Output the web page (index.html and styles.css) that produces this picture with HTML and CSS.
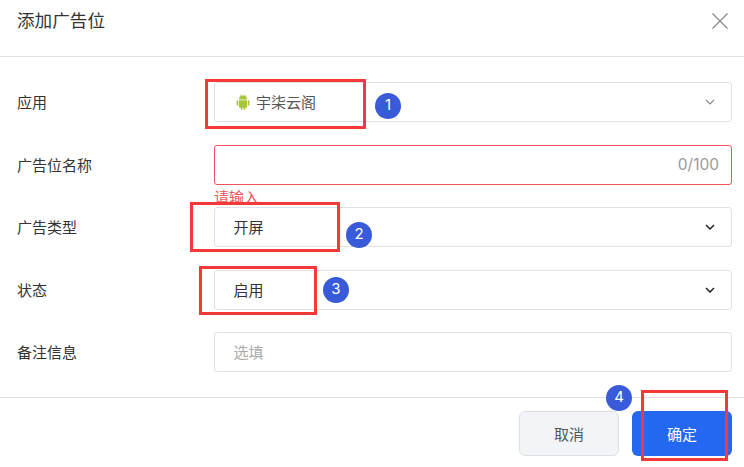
FILE: index.html
```html
<!DOCTYPE html>
<html lang="zh-CN">
<head>
    <meta charset="UTF-8">
    <title>添加广告位</title>
    <link rel="stylesheet" href="styles.css">
</head>
<body>
    <div class="dialog">
        <div class="dialog-header">
            <h2>添加广告位</h2>
            <svg class="close-icon" viewBox="0 0 16 16" width="16" height="16">
                <path d="M0.5 0.5L15.5 15.5M15.5 0.5L0.5 15.5"/>
            </svg>
        </div>

        <div class="dialog-body">
            <div class="form-row">
                <label>应用</label>
                <div class="field">
                    <span class="field-value with-icon">
                        <svg class="android-icon" viewBox="0 0 14 16" width="14" height="16">
                            <path d="M3 5.6a4 4 0 0 1 8 0z"/>
                            <path d="M3 6.2h8v6.6a1 1 0 0 1-1 1H9.2v1.4a.8.8 0 0 1-1.6 0v-1.4H6.4v1.4a.8.8 0 0 1-1.6 0v-1.4H4a1 1 0 0 1-1-1z"/>
                            <rect x="0.6" y="6.2" width="1.7" height="5.4" rx="0.85"/>
                            <rect x="11.7" y="6.2" width="1.7" height="5.4" rx="0.85"/>
                            <path class="android-antenna" d="M4.6 0.6l1 1.6M9.4 0.6l-1 1.6"/>
                        </svg>
                        宇柒云阁
                    </span>
                    <svg class="chevron light" viewBox="0 0 10 6" width="10" height="6"><path d="M1 1l4 4 4-4"/></svg>
                </div>
            </div>

            <div class="form-row">
                <label>广告位名称</label>
                <div class="field error">
                    <span class="counter">0/100</span>
                </div>
                <span class="error-text">请输入</span>
            </div>

            <div class="form-row">
                <label>广告类型</label>
                <div class="field">
                    <span class="field-value">开屏</span>
                    <svg class="chevron" viewBox="0 0 10 6" width="10" height="6"><path d="M1 1l4 4 4-4"/></svg>
                </div>
            </div>

            <div class="form-row">
                <label>状态</label>
                <div class="field">
                    <span class="field-value">启用</span>
                    <svg class="chevron" viewBox="0 0 10 6" width="10" height="6"><path d="M1 1l4 4 4-4"/></svg>
                </div>
            </div>

            <div class="form-row">
                <label>备注信息</label>
                <div class="field">
                    <span class="field-value placeholder">选填</span>
                </div>
            </div>
        </div>

        <div class="dialog-footer">
            <button class="btn btn-cancel">取消</button>
            <button class="btn btn-primary">确定</button>
        </div>

        <!-- annotations drawn over the screenshot -->
        <div class="mark mark-1"></div>
        <div class="mark mark-2"></div>
        <div class="mark mark-3"></div>
        <div class="mark mark-4"></div>
        <div class="badge badge-1">1</div>
        <div class="badge badge-2">2</div>
        <div class="badge badge-3">3</div>
        <div class="badge badge-4">4</div>
    </div>
</body>
</html>
```

FILE: styles.css
```css
* {
    box-sizing: border-box;
    margin: 0;
    padding: 0;
    font-family: Inter, 'Noto Sans CJK SC', sans-serif;
}

body {
    background: #fff;
    overflow: hidden;
}

.dialog {
    position: relative;
    width: 744px;
    height: 467px;
    background: #fff;
    color: #333;
}

.dialog-header {
    display: flex;
    justify-content: space-between;
    align-items: center;
    height: 57px;
    padding: 0 17px 14px;
    border-bottom: 1px solid #e0e0e6;
}

.dialog-header h2 {
    font-size: 17.6px;
    font-weight: 400;
    line-height: 42px;
}

.close-icon {
    margin-right: -1px;
    fill: none;
    stroke: #8a8a8a;
    stroke-width: 1.2;
}

.dialog-body {
    display: flex;
    flex-direction: column;
    gap: 22.5px;
    height: 341px;
    padding: 25px 12px 0 17px;
    border-bottom: 1px solid #e0e0e6;
}

.form-row {
    position: relative;
    display: flex;
    align-items: center;
    height: 40px;
}

.form-row label {
    width: 197px;
    padding-bottom: 1px;
    font-size: 15px;
}

.field {
    flex: 1;
    display: flex;
    justify-content: space-between;
    align-items: center;
    height: 40px;
    padding: 0 16px 0 19px;
    border: 1px solid #e0e0e6;
    border-radius: 3px;
    background: #fff;
}

.field.error {
    border-color: #f2545b;
    justify-content: flex-end;
    padding-right: 12px;
}

.field-value {
    padding-bottom: 1px;
    margin-left: -0.5px;
    font-size: 15px;
    color: #333;
}

.field-value.with-icon {
    display: flex;
    align-items: center;
    gap: 6px;
    margin-left: 2px;
    color: #555;
}

.field-value.placeholder {
    color: #aaa;
}

.android-icon {
    fill: #a4c639;
}

.android-antenna {
    fill: none;
    stroke: #a4c639;
    stroke-width: 0.8;
}

.counter {
    font-size: 15.5px;
    color: #999;
}

.error-text {
    position: absolute;
    left: 197px;
    top: 42px;
    font-size: 15px;
    line-height: 22px;
    color: #f2545b;
}

.chevron {
    fill: none;
    stroke: #222;
    stroke-width: 1.5;
}

.chevron.light {
    stroke: #8a8a8a;
    stroke-width: 1.2;
}

.dialog-footer {
    display: flex;
    justify-content: flex-end;
    gap: 13px;
    padding: 13px 12px 0;
}

.btn {
    width: 100px;
    height: 45px;
    border-radius: 6px;
    font-size: 15px;
    cursor: pointer;
}

.btn-cancel {
    background: #f3f4f8;
    border: 1px solid #dfe0e6;
    color: #555;
}

.btn-primary {
    background: #2468f2;
    border: none;
    color: #fff;
}

.mark {
    position: absolute;
    border: 3px solid #f53838;
}

.mark-1 { left: 205px; top: 79px; width: 161px; height: 50px; }
.mark-2 { left: 190px; top: 202px; width: 150px; height: 50px; }
.mark-3 { left: 199px; top: 266px; width: 118px; height: 49px; }
.mark-4 { left: 641px; top: 390px; width: 87px; height: 71px; }

.badge {
    position: absolute;
    width: 26px;
    height: 26px;
    border-radius: 50%;
    background: #3a5bd9;
    color: #fff;
    font-size: 15px;
    line-height: 24px;
    text-align: center;
}

.badge-1 { left: 375px; top: 93px; }
.badge-2 { left: 346px; top: 222px; }
.badge-3 { left: 323px; top: 277px; }
.badge-4 { left: 606px; top: 385px; }
```
